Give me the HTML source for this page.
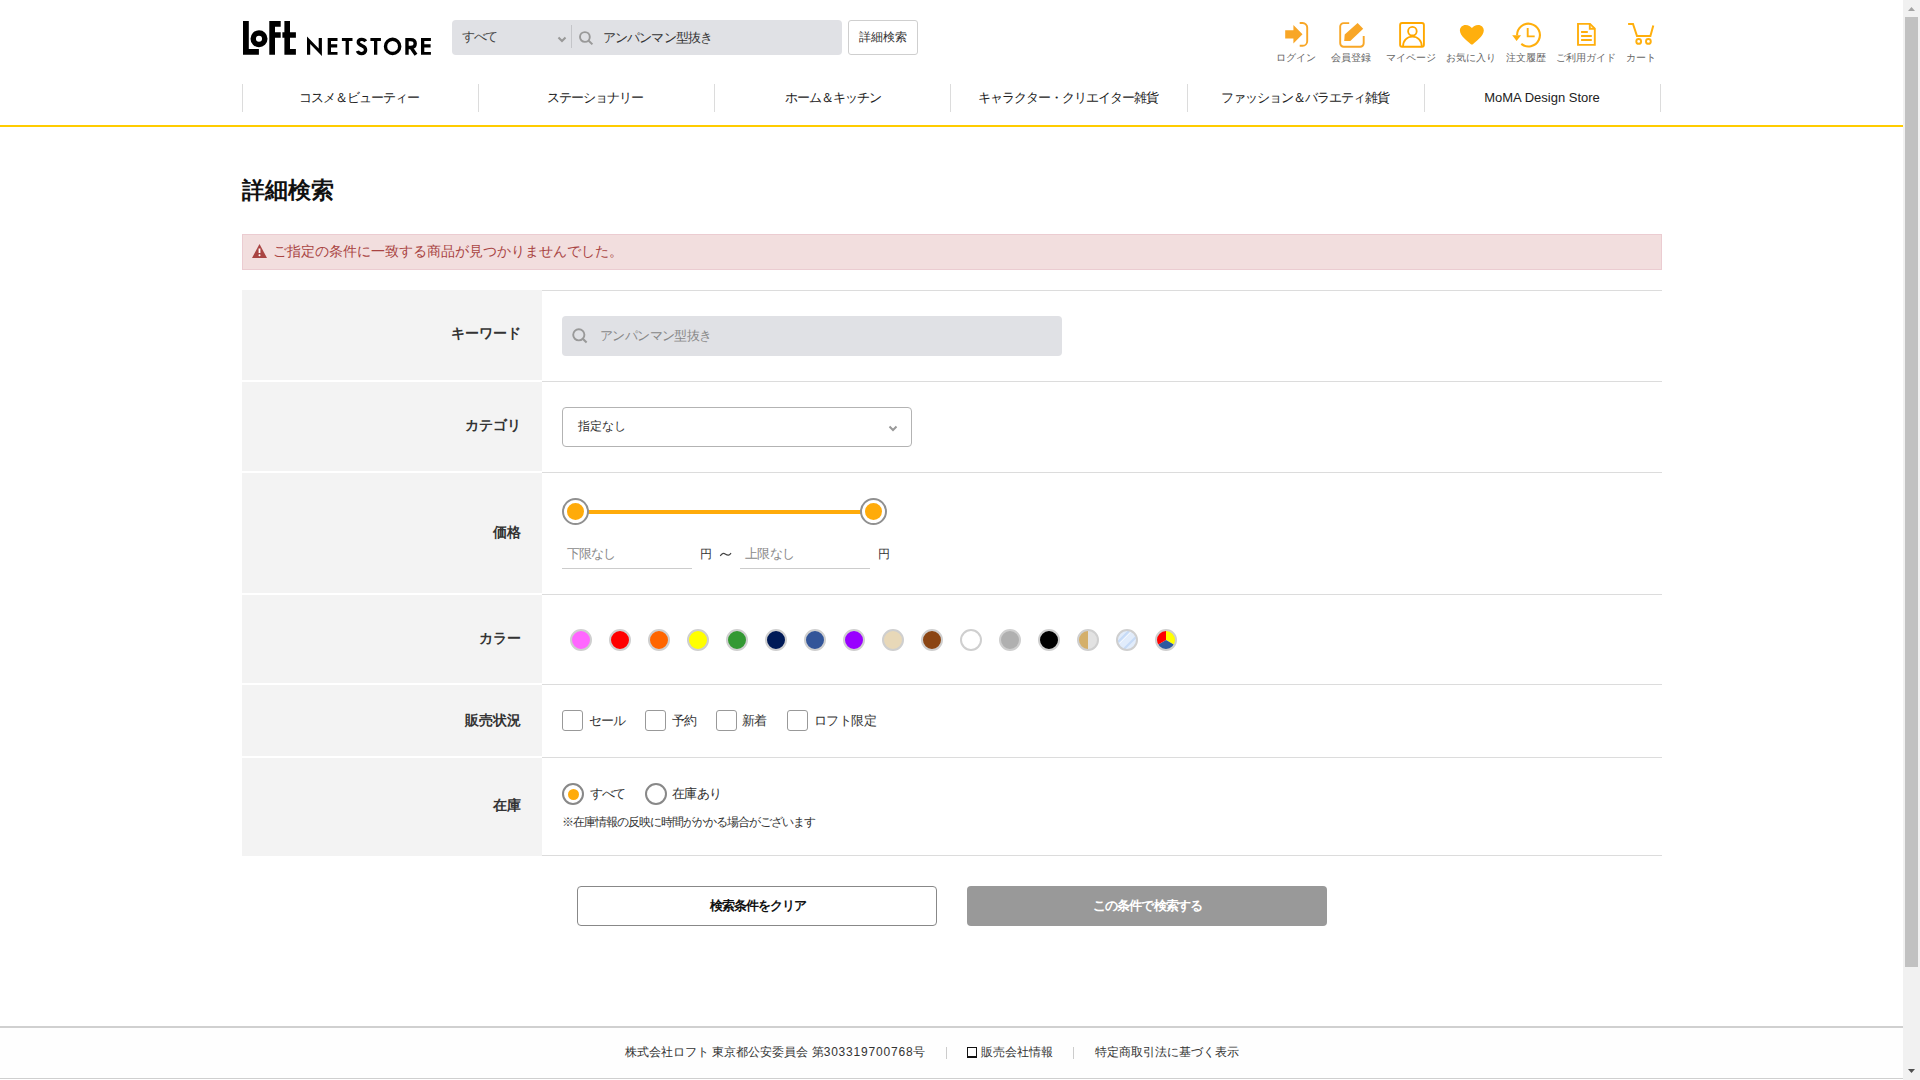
<!DOCTYPE html>
<html lang="ja"><head><meta charset="utf-8"><title>詳細検索 | ロフト公式通販サイト</title>
<style>
*{box-sizing:border-box;margin:0;padding:0}
html,body{width:1920px;height:1080px;overflow:hidden;background:#fff}
body{position:relative;font-family:"Liberation Sans",sans-serif;color:#333;font-size:13px;line-height:1}
.a{position:absolute}
.t{position:absolute;white-space:nowrap;line-height:1}
.sep{position:absolute;top:84px;width:1px;height:28px;background:#dcdcdc}
.nav{position:absolute;top:91px;height:14px;width:236px;text-align:center;font-size:13px;color:#222;letter-spacing:-1px}
.lbl{position:absolute;top:53px;font-size:10px;color:#666;text-align:center;width:70px}
.th{position:absolute;left:242px;width:300px;background:#f3f3f3}
.bd{position:absolute;left:542px;width:1120px;height:1px;background:#dcdcdc}
.lab{position:absolute;right:1399px;font-size:14px;font-weight:bold;color:#333;text-align:right}
.sw{position:absolute;top:629px;width:22px;height:22px;border-radius:50%;border:2px solid #cfcfcf}
.cb{position:absolute;top:710px;width:21px;height:21px;border:1px solid #999;border-radius:3px;background:#fff}
.cbl{position:absolute;top:714px;font-size:13px;color:#333}
</style></head><body>

<!-- logo -->
<svg class="a" style="left:0;top:0" width="460" height="70" viewBox="0 0 460 70">
 <g fill="#000">
  <path d="M243,21H248.8V49.1H258.9V54.7H243Z"/>
  <path fill-rule="evenodd" d="M259,30.2A8.5,8.5 0 1 1 259,47.2A8.5,8.5 0 1 1 259,30.2ZM259,35.7A3.05,3.05 0 1 0 259,41.8A3.05,3.05 0 1 0 259,35.7Z"/>
  <path d="M269.3,21H280.7V26.7H275V32.3H280.7V37.8H275V54.7H269.3Z"/>
  <path d="M284.4,21H290V32.3H295.9V37.8H290V49.1H295.9V54.7H284.4V37.8H282.4V32.3H284.4Z"/>
  <path d="M307,36.5L318.7,48.6V38H321.9V56L310.2,44V54.8H307Z"/>
  <path d="M327.7,38H337.5V41H331V44.2H337.2V47.5H331V51.9H337.5V54.8H327.7Z"/>
  <path d="M341.9,38H352.5V41H348.9V54.8H345.6V41H341.9Z"/>
  <path d="M370.4,38H380.9V41H377.3V54.8H374V41H370.4Z"/>
  <path d="M421,38H430.9V41H424.3V44.2H430.6V47.5H424.3V51.9H430.9V54.8H421Z"/>
 </g>
 <g fill="none" stroke="#000" stroke-width="3.4">
  <path d="M365.6,41.3C364.8,39.9 363.3,39.4 361.7,39.4C359.6,39.4 358.3,40.7 358.3,42.3C358.3,44.3 360.3,45 362.2,45.8C364.3,46.6 365.6,47.8 365.6,50.1C365.6,52.3 363.8,53.6 361.5,53.6C359.5,53.6 358,52.6 357.4,51"/>
  <circle cx="392.6" cy="46.4" r="7.1"/>
  <path d="M407,54.8V39.6H410.8C413.6,39.6 415.2,41.3 415.2,43.6C415.2,45.9 413.6,47.5 410.8,47.5H407M410.8,47.2L416,54.8"/>
 </g>
</svg>

<!-- search bar -->
<div class="a" style="left:452px;top:20px;width:390px;height:35px;background:#e0e1e5;border-radius:4px"></div>
<div class="t" style="left:462px;top:30px;font-size:13px;color:#444;letter-spacing:-1.5px">すべて</div>
<svg class="a" style="left:557px;top:36px" width="10" height="8"><path d="M1.5,1.5L5,5L8.5,1.5" fill="none" stroke="#999" stroke-width="2.1"/></svg>
<div class="a" style="left:571px;top:25px;width:1px;height:23px;background:#c4c5c9"></div>
<svg class="a" style="left:577px;top:29px" width="18" height="18"><circle cx="7.9" cy="8" r="4.9" fill="none" stroke="#999" stroke-width="1.9"/><path d="M11.4,11.5L15.4,15.4" stroke="#999" stroke-width="2"/></svg>
<div class="t" style="left:603px;top:31px;font-size:13px;color:#333;letter-spacing:-0.9px">アンパンマン型抜き</div>
<div class="a" style="left:848px;top:20px;width:70px;height:35px;border:1px solid #cfcfcf;border-radius:3px;background:#fff"></div>
<div class="t" style="left:848px;top:31px;width:70px;text-align:center;font-size:12px;color:#333">詳細検索</div>

<!-- header icons -->
<svg class="a" style="left:1270px;top:15px" width="400" height="40" viewBox="1270 15 400 40">
 <path d="M1285.2,30.3H1293.4V25L1302.5,34.2L1293.4,43.5V38.4H1285.2Z" fill="#f8a626"/>
 <path d="M1299.7,23H1302.6A4.6,4.6 0 0 1 1307.2,27.6V41.2A4.6,4.6 0 0 1 1302.6,45.8H1299.7" fill="none" stroke="#f8a626" stroke-width="1.9"/>
 <path d="M1349.2,23.1H1343.6A3.4,3.4 0 0 0 1340.2,26.5V43.3A3.4,3.4 0 0 0 1343.6,46.7H1360.3A3.4,3.4 0 0 0 1363.7,43.3V36" fill="none" stroke="#f8a626" stroke-width="1.9"/>
 <path d="M1344.7,34.4L1357.6,23.1L1363.2,28.8L1350.3,40.9H1344.2Z" fill="#f8a626"/>
 <rect x="1400.1" y="23" width="23.8" height="23.8" rx="2" fill="none" stroke="#ffa800" stroke-width="1.9"/>
 <circle cx="1412.4" cy="31.2" r="4.3" fill="none" stroke="#ffa800" stroke-width="1.8"/>
 <path d="M1403,46.5C1403,40.5 1407,36.6 1412.4,36.6C1417.8,36.6 1421.8,40.5 1421.8,46.5" fill="none" stroke="#ffa800" stroke-width="1.8"/>
 <path d="M1470.6,43.9C1468.5,42 1459.9,36 1459.9,30.5C1459.9,27.2 1462.4,24.9 1465.6,24.9C1468.6,24.9 1470.6,26.6 1471.9,28C1473.2,26.6 1475.2,24.9 1478.2,24.9C1481.4,24.9 1483.8,27.2 1483.8,30.5C1483.8,36 1475.3,42 1473.2,43.9Q1471.9,45.2 1470.6,43.9Z" fill="#ffaf0d"/>
 <path d="M1521.3,43.9A11.4,11.4 0 1 0 1517.1,35.3" fill="none" stroke="#ffaf0d" stroke-width="2.1"/>
 <path d="M1512.2,35.2H1521.1L1516.6,40.9Z" fill="#ffaf0d"/>
 <path d="M1527.7,28V36.4H1534.7" fill="none" stroke="#ffaf0d" stroke-width="1.9"/>
 <path d="M1578,23.9H1590L1594.8,28.6V44.9H1578Z" fill="none" stroke="#ffaf0d" stroke-width="1.9"/>
 <path d="M1589.8,24V28.8H1594.6" fill="none" stroke="#ffaf0d" stroke-width="1.9"/>
 <path d="M1581.1,32H1587.8M1581.1,36H1591.8M1581.1,40H1591.8" stroke="#ffaf0d" stroke-width="1.9"/>
 <path d="M1628.1,24H1633L1637,36H1650.4L1653.3,25.5" fill="none" stroke="#ffaf0d" stroke-width="2"/>
 <circle cx="1638.7" cy="41.4" r="2.4" fill="none" stroke="#ffaf0d" stroke-width="1.9"/>
 <circle cx="1648.4" cy="41.4" r="2.4" fill="none" stroke="#ffaf0d" stroke-width="1.9"/>
</svg>
<div class="lbl" style="left:1261px">ログイン</div>
<div class="lbl" style="left:1316px">会員登録</div>
<div class="lbl" style="left:1376px">マイページ</div>
<div class="lbl" style="left:1436px">お気に入り</div>
<div class="lbl" style="left:1491px">注文履歴</div>
<div class="lbl" style="left:1551px">ご利用ガイド</div>
<div class="lbl" style="left:1606px">カート</div>

<!-- nav -->
<div class="sep" style="left:242px"></div>
<div class="sep" style="left:478px"></div>
<div class="sep" style="left:714px"></div>
<div class="sep" style="left:950px"></div>
<div class="sep" style="left:1187px"></div>
<div class="sep" style="left:1424px"></div>
<div class="sep" style="left:1660px"></div>
<div class="nav" style="left:241px">コスメ＆ビューティー</div>
<div class="nav" style="left:477px">ステーショナリー</div>
<div class="nav" style="left:715px">ホーム＆キッチン</div>
<div class="nav" style="left:950px">キャラクター・クリエイター雑貨</div>
<div class="nav" style="left:1187px">ファッション＆バラエティ雑貨</div>
<div class="nav" style="left:1424px;letter-spacing:0">MoMA Design Store</div>
<div class="a" style="left:0;top:125px;width:1903px;height:2px;background:#ffcc00"></div>

<!-- heading -->
<div class="t" style="left:242px;top:179px;font-size:23px;font-weight:bold;color:#111">詳細検索</div>

<!-- alert -->
<div class="a" style="left:242px;top:234px;width:1420px;height:36px;background:#f2dede;border:1px solid #ebccd1"></div>
<svg class="a" style="left:251px;top:243px" width="17" height="16"><path d="M8.5,1L16,15H1Z" fill="#a94442"/><path d="M8.5,5.5V10" stroke="#fff" stroke-width="1.8"/><circle cx="8.5" cy="12.3" r="1" fill="#fff"/></svg>
<div class="t" style="left:273px;top:244px;font-size:14px;color:#a94442">ご指定の条件に一致する商品が見つかりませんでした。</div>

<!-- table -->
<div class="th" style="top:290px;height:90px"></div>
<div class="th" style="top:382px;height:89px"></div>
<div class="th" style="top:473px;height:120px"></div>
<div class="th" style="top:595px;height:88px"></div>
<div class="th" style="top:685px;height:71px"></div>
<div class="th" style="top:758px;height:98px"></div>
<div class="bd" style="top:290px"></div>
<div class="bd" style="top:381px"></div>
<div class="bd" style="top:472px"></div>
<div class="bd" style="top:594px"></div>
<div class="bd" style="top:684px"></div>
<div class="bd" style="top:757px"></div>
<div class="bd" style="top:855px"></div>

<div class="lab" style="top:326px">キーワード</div>
<div class="lab" style="top:418px">カテゴリ</div>
<div class="lab" style="top:525px">価格</div>
<div class="lab" style="top:631px">カラー</div>
<div class="lab" style="top:713px">販売状況</div>
<div class="lab" style="top:798px">在庫</div>

<!-- keyword -->
<div class="a" style="left:562px;top:316px;width:500px;height:40px;background:#e0e1e5;border-radius:4px"></div>
<svg class="a" style="left:571px;top:327px" width="18" height="18"><circle cx="7.8" cy="7.8" r="5.6" fill="none" stroke="#999" stroke-width="1.9"/><path d="M11.8,11.8L15.6,15.6" stroke="#999" stroke-width="2.1"/></svg>
<div class="t" style="left:600px;top:329px;font-size:13px;color:#888;letter-spacing:-0.6px">アンパンマン型抜き</div>

<!-- category -->
<div class="a" style="left:562px;top:407px;width:350px;height:40px;border:1px solid #b3b3b3;border-radius:4px;background:#fff"></div>
<div class="t" style="left:578px;top:420px;font-size:12px;color:#333">指定なし</div>
<svg class="a" style="left:888px;top:425px" width="10" height="8"><path d="M1.5,1.5L5,5L8.5,1.5" fill="none" stroke="#999" stroke-width="2"/></svg>

<!-- price slider -->
<div class="a" style="left:585px;top:510px;width:280px;height:3.5px;background:#ffab0a"></div>
<div class="a" style="left:562px;top:498px;width:27px;height:27px;border-radius:50%;border:2px solid #909090;background:#fff"></div>
<div class="a" style="left:567px;top:503px;width:17px;height:17px;border-radius:50%;background:#ffab0a"></div>
<div class="a" style="left:860px;top:498px;width:27px;height:27px;border-radius:50%;border:2px solid #909090;background:#fff"></div>
<div class="a" style="left:865px;top:503px;width:17px;height:17px;border-radius:50%;background:#ffab0a"></div>
<div class="t" style="left:567px;top:547px;font-size:13px;color:#8a8a8a;letter-spacing:-0.9px">下限なし</div>
<div class="a" style="left:562px;top:568px;width:130px;height:1px;background:#ccc"></div>
<div class="t" style="left:700px;top:548px;font-size:12px;color:#333">円</div>
<svg class="a" style="left:715px;top:545px" width="22" height="16" viewBox="715 545 22 16"><path d="M720.3,556C721.6,553.3 723.6,552.8 725.6,554.2C727.6,555.6 729.6,555.6 731,553" fill="none" stroke="#444" stroke-width="1.2"/></svg>
<div class="t" style="left:745px;top:547px;font-size:13px;color:#8a8a8a;letter-spacing:-0.6px">上限なし</div>
<div class="a" style="left:740px;top:568px;width:130px;height:1px;background:#ccc"></div>
<div class="t" style="left:878px;top:548px;font-size:12px;color:#333">円</div>

<!-- colors -->
<div class="sw" style="left:570px;background:#ff66ff"></div>
<div class="sw" style="left:609px;background:#ff0000"></div>
<div class="sw" style="left:648px;background:#ff6600"></div>
<div class="sw" style="left:687px;background:#ffff00"></div>
<div class="sw" style="left:726px;background:#339933"></div>
<div class="sw" style="left:765px;background:#001a57"></div>
<div class="sw" style="left:804px;background:#335599"></div>
<div class="sw" style="left:843px;background:#9900ff"></div>
<div class="sw" style="left:882px;background:#e8d8b8"></div>
<div class="sw" style="left:921px;background:#8b4513"></div>
<div class="sw" style="left:960px;background:#fff"></div>
<div class="sw" style="left:999px;background:#b0b0b0"></div>
<div class="sw" style="left:1038px;background:#000"></div>
<div class="sw" style="left:1077px;background:linear-gradient(90deg,#d4af6a 50%,#e2e2e2 50%)"></div>
<svg class="a" style="left:1116px;top:629px" width="22" height="22" viewBox="0 0 22 22"><defs><clipPath id="cl"><circle cx="11" cy="11" r="10"/></clipPath></defs><g clip-path="url(#cl)"><rect width="22" height="22" fill="#e1ecfb"/><path d="M2,13L13,2M8,20L20,8" stroke="#c6dbf7" stroke-width="2.2"/><path d="M3.5,14.5L14.5,3.5" stroke="#f2f7fe" stroke-width="1"/></g><circle cx="11" cy="11" r="10" fill="none" stroke="#cfcfcf" stroke-width="2"/></svg>
<svg class="a" style="left:1155px;top:629px" width="22" height="22" viewBox="0 0 22 22"><path d="M11,11V1A10,10 0 0 1 19.66,16Z" fill="#ffff00"/><path d="M11,11L19.66,16A10,10 0 0 1 2.34,16Z" fill="#2d5aa0"/><path d="M11,11L2.34,16A10,10 0 0 1 11,1Z" fill="#ff0000"/><circle cx="11" cy="11" r="10" fill="none" stroke="#cfcfcf" stroke-width="2"/></svg>

<!-- sales status -->
<div class="cb" style="left:562px"></div><div class="cbl" style="left:589px;letter-spacing:-1.2px">セール</div>
<div class="cb" style="left:645px"></div><div class="cbl" style="left:672px;letter-spacing:-1.5px">予約</div>
<div class="cb" style="left:716px"></div><div class="cbl" style="left:742px;letter-spacing:-1.25px">新着</div>
<div class="cb" style="left:787px"></div><div class="cbl" style="left:814px;letter-spacing:-0.6px">ロフト限定</div>

<!-- stock -->
<div class="a" style="left:562px;top:783px;width:22px;height:22px;border-radius:50%;border:2px solid #888;background:#fff"></div>
<div class="a" style="left:567.5px;top:788.5px;width:11px;height:11px;border-radius:50%;background:#ffab0a"></div>
<div class="t" style="left:590px;top:787px;font-size:13px;color:#333;letter-spacing:-1.5px">すべて</div>
<div class="a" style="left:645px;top:783px;width:22px;height:22px;border-radius:50%;border:2px solid #888;background:#fff"></div>
<div class="t" style="left:672px;top:787px;font-size:13px;color:#333;letter-spacing:-0.75px">在庫あり</div>
<div class="t" style="left:562px;top:816px;font-size:12px;color:#333;letter-spacing:-1px">※在庫情報の反映に時間がかかる場合がございます</div>

<!-- buttons -->
<div class="a" style="left:577px;top:886px;width:360px;height:40px;border:1px solid #888;border-radius:4px;background:#fff"></div>
<div class="t" style="left:577px;top:899px;width:360px;text-align:center;font-size:13px;font-weight:bold;color:#111;letter-spacing:-1px;text-indent:1px">検索条件をクリア</div>
<div class="a" style="left:967px;top:886px;width:360px;height:40px;border-radius:4px;background:#999"></div>
<div class="t" style="left:967px;top:899px;width:360px;text-align:center;font-size:13px;font-weight:bold;color:#fff;letter-spacing:-0.9px;text-indent:1px">この条件で検索する</div>

<!-- footer -->
<div class="a" style="left:0;top:1028px;width:1903px;height:50px;background:#fefefe"></div>
<div class="a" style="left:0;top:1026px;width:1903px;height:2px;background:#d0d0d0"></div>
<div class="t" style="left:625px;top:1046px;font-size:12px;color:#333">株式会社ロフト 東京都公安委員会 第<span style="letter-spacing:0.8px">303319700768</span>号</div>
<div class="a" style="left:946px;top:1047px;width:1px;height:12px;background:#ccc"></div>
<div class="a" style="left:967px;top:1047px;width:10px;height:11px;border:1.5px solid #111;border-bottom-width:2.5px"></div>
<div class="t" style="left:981px;top:1046px;font-size:12px;color:#333">販売会社情報</div>
<div class="a" style="left:1073px;top:1047px;width:1px;height:12px;background:#ccc"></div>
<div class="t" style="left:1095px;top:1046px;font-size:12px;color:#333">特定商取引法に基づく表示</div>
<div class="a" style="left:0;top:1078px;width:1903px;height:1px;background:#cfcfcf"></div>

<!-- scrollbar -->
<div class="a" style="left:1903px;top:0;width:17px;height:1080px;background:#f1f1f1"></div>
<div class="a" style="left:1905px;top:17px;width:13px;height:950px;background:#c1c1c1"></div>
<svg class="a" style="left:1903px;top:0" width="17" height="17"><path d="M5,11H12L8.5,7Z" fill="#a3a3a3"/></svg>
<svg class="a" style="left:1903px;top:1063px" width="17" height="17"><path d="M5,6H12L8.5,10Z" fill="#505050"/></svg>
</body></html>
